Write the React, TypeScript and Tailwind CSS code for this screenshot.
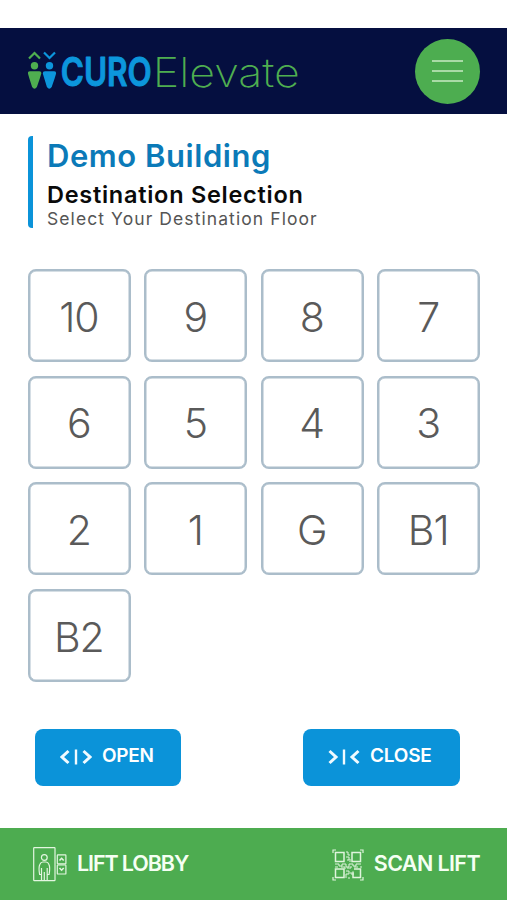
import React from "react";

const floors = ["10", "9", "8", "7", "6", "5", "4", "3", "2", "1", "G", "B1", "B2"];

function Logo() {
  return (
    <svg width="276" height="60" viewBox="28 41 276 60" fill="none">
      <path d="M29 58.500 34.500 53 40 58.500" stroke="#4fae50" strokeWidth="2.200" />
      <path d="M44 52.500 49.500 58 55 52.500" stroke="#0c96dc" strokeWidth="2.200" />
      <circle cx="34.500" cy="65.800" r="3.700" fill="#4fae50" />
      <circle cx="49.500" cy="65.800" r="3.700" fill="#0c96dc" />
      <path d="M30 71.200h9.400q2.200 0 1.900 2.200l-1.500 5-2.900 8.500q-2.400 3.500-4.800 0l-2.700-8.500-1.500-5q-.2-2.200 2.100-2.200Z" fill="#4fae50" />
      <path d="M45 71.200h9.200q2.200 0 1.900 2.200l-1.500 5-2.900 8.500q-2.400 3.500-4.800 0l-2.600-8.500-1.500-5q-.2-2.200 2.200-2.200Z" fill="#0c96dc" />
      <text x="60.800" y="86" fontFamily="Inter, sans-serif" fontWeight="600" fontSize="40" fill="#0c96dc" stroke="#0c96dc" strokeWidth="1" strokeLinejoin="round" textLength="91" lengthAdjust="spacingAndGlyphs">CURO</text>
      <text x="152.800" y="86.500" fontFamily="Inter, sans-serif" fontWeight="200" fontSize="40.500" fill="#4fae50" textLength="147" lengthAdjust="spacingAndGlyphs">Elevate</text>
    </svg>
  );
}

function DoorIcon({ closing = false }: { closing?: boolean }) {
  return (
    <svg width="32" height="16" viewBox="0 0 32 16" fill="none" stroke="#f0faff" strokeWidth="3">
      {closing ? (
        <path d="M1.500 2 8 8l-6.500 6M30.500 2 24 8l6.500 6" />
      ) : (
        <path d="M8.500 2 2 8l6.500 6M23.500 2 30 8l-6.500 6" />
      )}
      <path d="M16 .5V15.500" strokeWidth="2.400" />
    </svg>
  );
}

function LiftIcon() {
  return (
    <svg width="34" height="35" viewBox="0 0 34 35" fill="none" stroke="#e3f6e0" strokeWidth="1.200">
      <rect x=".7" y=".7" width="21.300" height="33" rx=".6" />
      <circle cx="11.300" cy="10.500" r="2.900" />
      <path d="M8.500 33.500V21M14.200 33.500V21M11.300 33.500V25M8.500 27.500H6.600q-1.200-7 .2-10 1-2.500 3-2.500h3.200q2 0 3 2.500 1.300 3 .1 10h-1.900" />
      <rect x="24.300" y="7.800" width="8.600" height="9" rx=".6" />
      <rect x="24.300" y="18" width="8.600" height="9" rx=".6" />
      <path d="m26.500 13.500 2.100-2.200 2.100 2.200M26.500 21l2.100 2.200 2.100-2.200" strokeWidth="1.600" />
    </svg>
  );
}

function QrIcon() {
  return (
    <svg width="32" height="32" viewBox="0 0 32 32" fill="none" stroke="#dff4dc" strokeWidth="1.200">
      <path d="M1 4V1h3M28 1h3v3M31 28v3h-3M4 31H1v-3" />
      <rect x="3.500" y="3.500" width="8.500" height="9" strokeWidth="1.500" />
      <rect x="20" y="3.500" width="8.500" height="9" strokeWidth="1.500" />
      <rect x="3.500" y="20" width="8.500" height="8.500" strokeWidth="1.500" />
      <path d="M22 20h6.500v8.500H21v-6" strokeWidth="1.500" />
      <path d="M14 3h2v3h2M14 8h3v3h-2M18 10v3M3 15h4v2h3v-2h4v3h3v-3h4v2h3v-2h5M3 18h3M9 18h4v2M15 19h4v-2M22 18h4M29 17v2M14 22h3v3h-3v4M17 28v2M19 23v2h3" strokeWidth="1" />
    </svg>
  );
}

export default function App() {
  return (
    <div className="flex h-[900px] w-[507px] flex-col overflow-hidden bg-white pt-[28px] font-['Inter',sans-serif]">
      <header className="flex h-[86px] shrink-0 items-center justify-between bg-[#050f40] pr-[27px] pl-[28px]">
        <Logo />
        <button className="flex size-[65px] flex-col items-center justify-center gap-2 rounded-full bg-[#4dad50]">
          <span className="h-[2px] w-[31px] bg-[#a9dba6]" />
          <span className="h-[2px] w-[31px] bg-[#a9dba6]" />
          <span className="h-[2px] w-[31px] bg-[#a9dba6]" />
        </button>
      </header>

      <section className="mt-[22px] ml-[28px] flex h-[92px] shrink-0">
        <div className="w-[5px] rounded-l-[4px] bg-[#0b93d9]" />
        <div className="ml-[14px] whitespace-nowrap">
          <h1 className="h-[41px] text-[31px] leading-[39px] font-semibold tracking-[0.550px] text-[#0b7ab8]">Demo Building</h1>
          <h2 className="h-[28px] text-[23.500px] leading-[36px] font-semibold tracking-[0.730px] text-[#0a0a0a]">Destination Selection</h2>
          <p className="text-[17.500px] leading-[27px] tracking-[1.080px] text-[#555]">Select Your Destination Floor</p>
        </div>
      </section>

      <main className="mt-[41px] ml-[28px] grid w-[452px] shrink-0 grid-cols-4 gap-x-[13.700px] gap-y-[13.600px]">
        {floors.map((floor) => (
          <button
            key={floor}
            className="flex h-[93px] items-center justify-center rounded-[8px] border-2 border-[#abbdca] pt-[4px] pr-[1px] text-[41px] font-[350] tracking-[-1px] text-[#5a5a5a] shadow-[inset_0_0_0_0.5px_#abbdca]"
          >
            {floor}
          </button>
        ))}
      </main>

      <div className="mt-[47px] ml-[35px] flex w-[425px] shrink-0 justify-between">
        <button className="flex h-[57px] w-[146px] items-center rounded-[8px] bg-[#0b93d9] pl-[25px] text-white">
          <DoorIcon />
          <span className="ml-[10px] pb-[2px] text-[19px] font-semibold tracking-[-0.300px]">OPEN</span>
        </button>
        <button className="flex h-[57px] w-[157px] items-center rounded-[8px] bg-[#0b93d9] pl-[25px] text-white">
          <DoorIcon closing />
          <span className="ml-[10px] pb-[2px] text-[19px] font-semibold tracking-[-0.200px]">CLOSE</span>
        </button>
      </div>

      <footer className="mt-auto flex h-[72px] shrink-0 items-center justify-between bg-[#4dac50] pr-[27px] pl-[33px] text-[21.500px] font-semibold text-[#f5fff3]">
        <div className="flex items-center gap-[10px] whitespace-nowrap">
          <LiftIcon />
          <span className="pb-[2px] tracking-[-1.100px]">LIFT LOBBY</span>
        </div>
        <div className="flex items-center gap-[10px] pt-[1px] whitespace-nowrap">
          <QrIcon />
          <span className="pb-[3px] tracking-[-0.600px]">SCAN LIFT</span>
        </div>
      </footer>
    </div>
  );
}
